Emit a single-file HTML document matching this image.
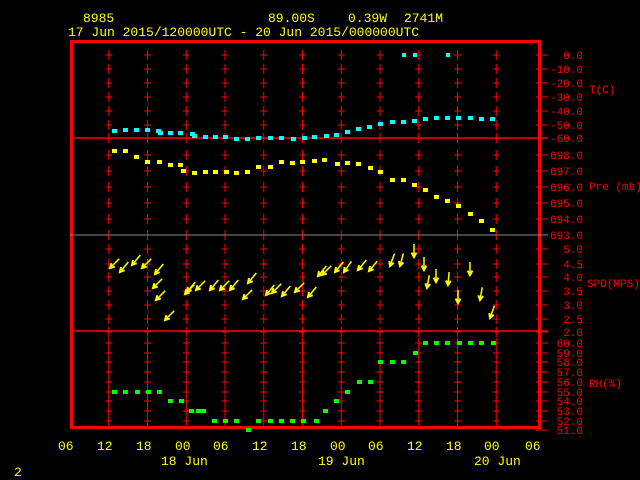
<!DOCTYPE html>
<html><head><meta charset="utf-8"><style>
html,body{margin:0;padding:0;background:#000;width:640px;height:480px;overflow:hidden}
svg{display:block}
text{font-family:"Liberation Mono",monospace}
</style></head><body>
<svg id="s" width="640" height="480" xmlns="http://www.w3.org/2000/svg">
<g fill="#ffff00" font-size="13">
<text x="83" y="22">8985</text>
<text x="268" y="22">89.00S</text>
<text x="348" y="22">0.39W</text>
<text x="404" y="22">2741M</text>
<text x="68" y="36">17 Jun 2015/120000UTC - 20 Jun 2015/000000UTC</text>
<text x="58" y="450">06</text><text x="97" y="450">12</text><text x="136" y="450">18</text>
<text x="175" y="450">00</text><text x="213" y="450">06</text><text x="252" y="450">12</text>
<text x="291" y="450">18</text><text x="330" y="450">00</text><text x="368" y="450">06</text>
<text x="407" y="450">12</text><text x="446" y="450">18</text><text x="484" y="450">00</text>
<text x="525" y="450">06</text>
<text x="161" y="465">18 Jun</text><text x="318" y="465">19 Jun</text><text x="474" y="465">20 Jun</text>
<text x="14" y="476">2</text>
</g>
<g id="grid"></g>
<g id="lab" fill="#ff0000" font-size="11"></g>
<g fill="#ff0000" font-size="11">
<text x="589" y="93">T(C)</text>
<text x="589" y="190">Pre (mb)</text>
<text x="587" y="287">SPD(MPS)</text>
<text x="589" y="387">RH(%)</text>
</g>
<rect x="71.5" y="41.5" width="468" height="386" fill="none" stroke="#ff0000" stroke-width="3"/>
<line x1="70" y1="138" x2="548" y2="138" stroke="#ff0000" stroke-width="1.5"/>
<line x1="70" y1="235" x2="548" y2="235" stroke="#888" stroke-width="1"/>
<line x1="70" y1="331" x2="548" y2="331" stroke="#ff0000" stroke-width="1.5"/>
<g id="d"></g>
</svg>
<script>
var NS="http://www.w3.org/2000/svg";
function el(p,t,a){var e=document.createElementNS(NS,t);for(var k in a)e.setAttribute(k,a[k]);p.appendChild(e);return e;}
var g=document.getElementById('grid'),lab=document.getElementById('lab'),d=document.getElementById('d');
var ys=[];
var T=[["0.0",55],["-10.0",69],["-20.0",83],["-30.0",97],["-40.0",111],["-50.0",125],["-60.0",138]];
var P=[["698.0",155],["697.0",171],["696.0",187],["695.0",203],["694.0",219],["693.0",235]];
var S=[["5.0",249],["4.5",264],["4.0",277],["3.5",291],["3.0",305],["2.5",319],["2.0",332]];
var R=[["60.0",343],["59.0",353],["58.0",362],["57.0",372],["56.0",382],["55.0",392],["54.0",401],["53.0",411],["52.0",421],["51.0",430]];
[T,P,S,R].forEach(function(a){a.forEach(function(v){ys.push(v[1]);
 var t=el(lab,'text',{x:583,y:v[1]+4,'text-anchor':'end'});t.textContent=v[0];
 el(g,'line',{x1:536,y1:v[1],x2:548,y2:v[1],stroke:'#ff0000','stroke-width':1});});});
for(var i=1;i<12;i++){var x=70+i*38.75;
 ys.forEach(function(y){if(y>425)return;
  el(g,'line',{x1:x-3.5,y1:y,x2:x+3.5,y2:y,stroke:'#ff0000','stroke-width':1});
  el(g,'line',{x1:x,y1:y-5,x2:x,y2:y+5,stroke:'#ff0000','stroke-width':1});});}
function sq(x,y,c,w){el(d,'rect',{x:x-2,y:y-2,width:w||5,height:4,fill:c});}
var cy=[[114,131],[125,130],[136,130],[147,130],[158,131],[160,133],[170,133],[180,133],[192,134],[194,136],[205,137],[215,137],[225,137],[236,139],[247,139],[258,138],[270,138],[281,138],[293,139],[304,138],[314,137],[326,136],[336,135],[347,132],[358,129],[369,127],[380,124],[392,122],[403,122],[414,121],[425,119],[436,118],[447,118],[458,118],[470,118],[481,119],[492,119]];
cy.forEach(function(p){sq(p[0],p[1],'#00ffff');});
[[404,55],[415,55],[448,55]].forEach(function(p){sq(p[0],p[1],'#00ffff',4);});
var py=[[114,151],[125,151],[136,157],[147,162],[159,162],[170,165],[180,165],[183,171],[194,173],[205,172],[215,172],[226,172],[236,173],[247,172],[258,167],[270,167],[281,162],[292,163],[302,162],[314,161],[324,160],[337,164],[347,163],[358,164],[370,168],[380,172],[392,180],[403,180],[414,185],[425,190],[436,197],[447,201],[458,206],[470,214],[481,221],[492,230]];
py.forEach(function(p){sq(p[0],p[1],'#ffff00');});
var gy=[[114,392],[125,392],[137,392],[148,392],[159,392],[170,401],[181,401],[191,411],[198,411],[203,411],[214,421],[225,421],[236,421],[248,430],[258,421],[270,421],[281,421],[292,421],[303,421],[316,421],[325,411],[336,401],[347,392],[359,382],[370,382],[380,362],[392,362],[403,362],[415,353],[425,343],[436,343],[447,343],[459,343],[470,343],[481,343],[493,343]];
gy.forEach(function(p){sq(p[0],p[1],'#00ff00');});
var ar=[[110,268,45],[120,272,40],[132,265,40],[142,268,45],[155,274,40],[153,288,45],[156,300,45],[165,320,45],[185,294,45],[187,292,40],[196,290,45],[210,290,40],[220,290,45],[230,290,40],[243,299,45],[248,283,40],[266,295,40],[272,293,45],[282,296,40],[295,292,45],[308,297,40],[318,276,40],[322,275,45],[335,272,40],[344,272,35],[358,270,40],[369,271,40],[390,266,20],[400,266,15],[414,257,0],[424,270,0],[427,288,10],[436,282,0],[448,285,5],[458,303,0],[470,275,0],[480,300,10],[490,318,20]];
ar.forEach(function(a){var r=a[2]*Math.PI/180,L=13;
 var x2=a[0]+L*Math.sin(r),y2=a[1]-L*Math.cos(r);
 el(d,'line',{x1:a[0],y1:a[1],x2:x2,y2:y2,stroke:'#ffff00','stroke-width':1.5});
 var h=5,b1=r-0.5,b2=r+0.5;
 el(d,'polyline',{points:(a[0]+h*Math.sin(b1))+','+(a[1]-h*Math.cos(b1))+' '+a[0]+','+a[1]+' '+(a[0]+h*Math.sin(b2))+','+(a[1]-h*Math.cos(b2)),fill:'none',stroke:'#ffff00','stroke-width':2});});
</script>
</body></html>
